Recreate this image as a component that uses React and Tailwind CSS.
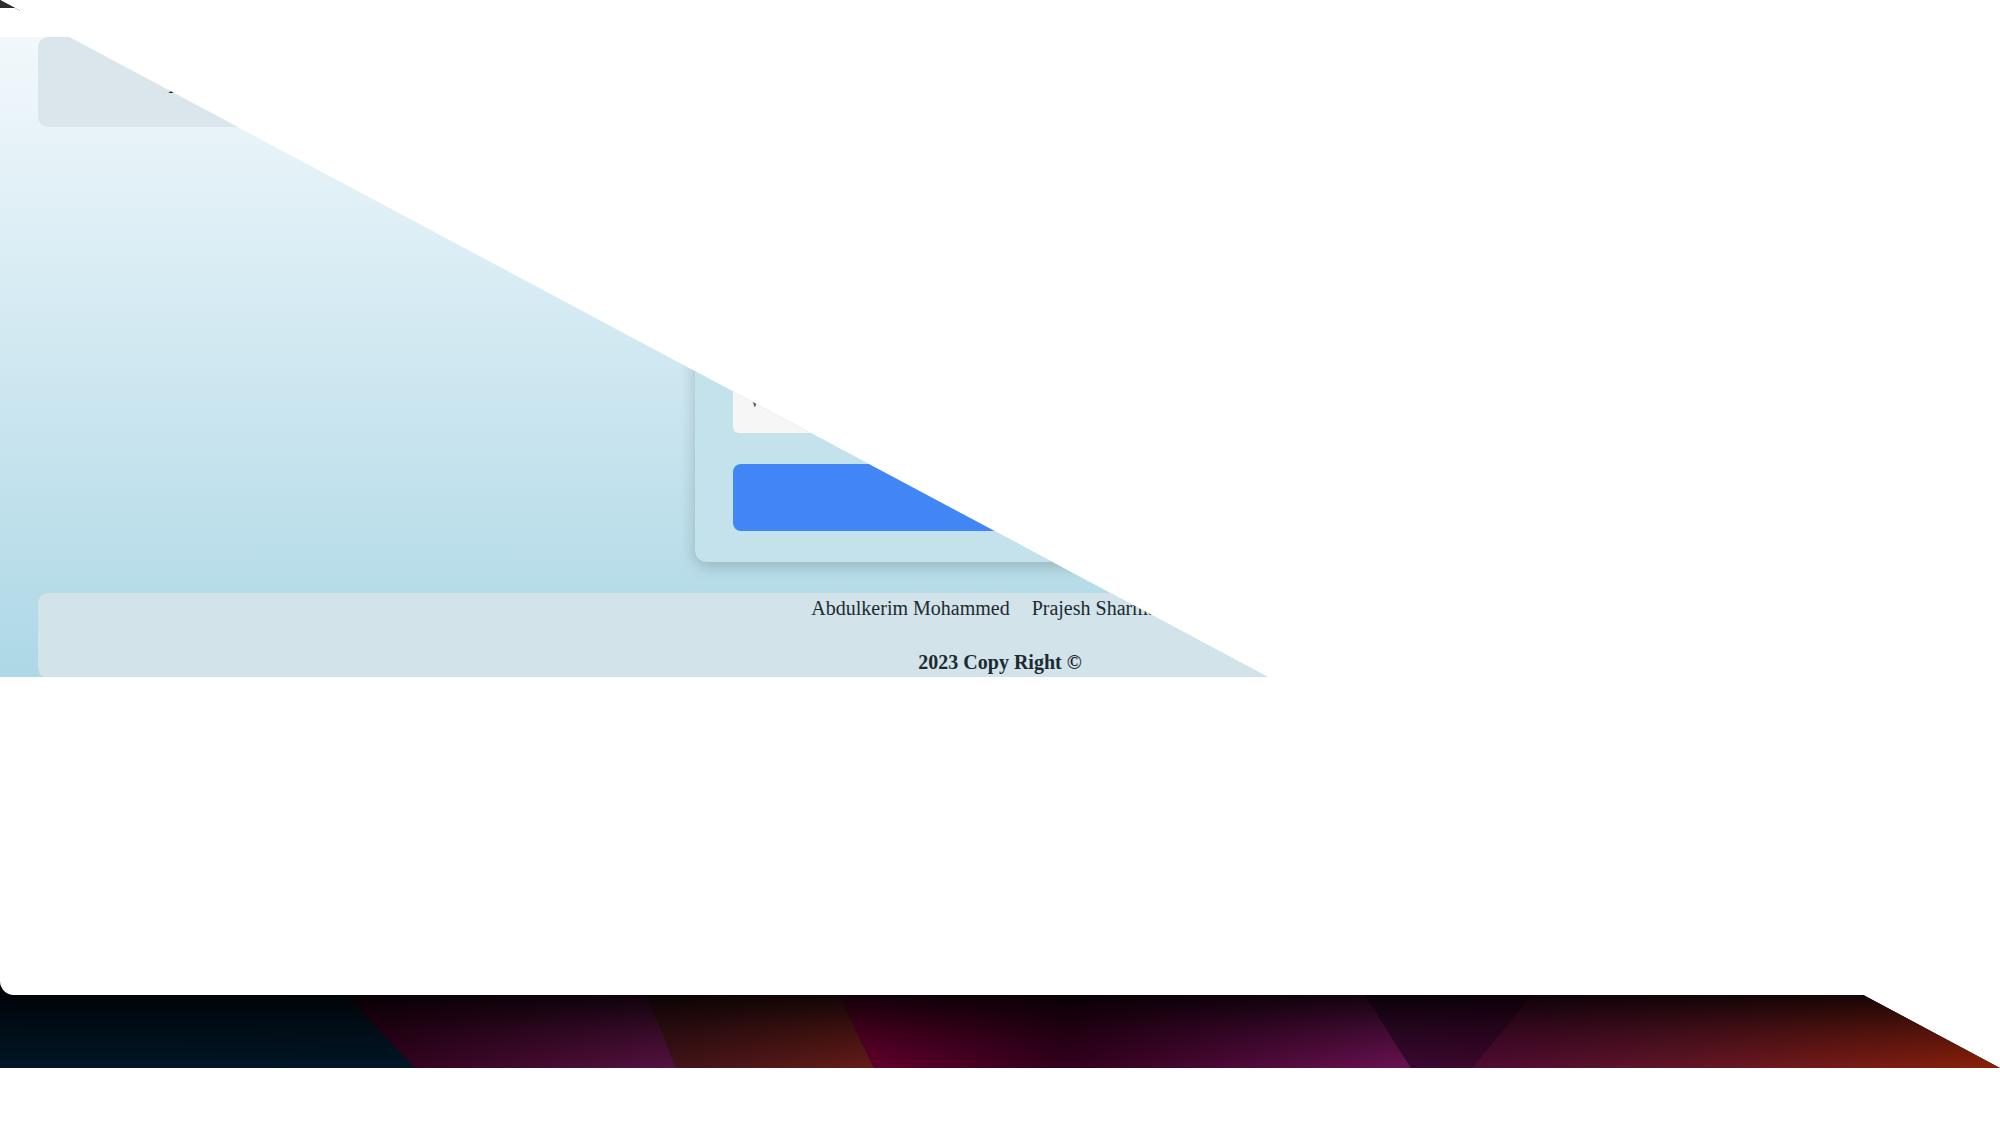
// Window captured mid-transition: everything above the diagonal is cut away
function Wallpaper() {
  return (
    <svg className="block w-[2000px] h-[73px]" viewBox="0 0 2000 73" preserveAspectRatio="none">
      <defs>
        <linearGradient id="fade" x1="0" y1="0" x2="0" y2="1">
          <stop offset="0" stopColor="#000" stopOpacity="0.82" />
          <stop offset="0.5" stopColor="#000" stopOpacity="0.36" />
          <stop offset="1" stopColor="#000" stopOpacity="0" />
        </linearGradient>
        <linearGradient id="b1" x1="0" y1="0" x2="1" y2="0">
          <stop offset="0" stopColor="#011626" />
          <stop offset="1" stopColor="#001322" />
        </linearGradient>
        <linearGradient id="b2" x1="0" y1="0" x2="1" y2="0">
          <stop offset="0" stopColor="#2c0018" />
          <stop offset="1" stopColor="#561240" />
        </linearGradient>
        <linearGradient id="b3" x1="0" y1="0" x2="1" y2="0">
          <stop offset="0" stopColor="#3d1218" />
          <stop offset="1" stopColor="#651c18" />
        </linearGradient>
        <linearGradient id="b4" x1="0" y1="0" x2="1" y2="0">
          <stop offset="0" stopColor="#6a002e" />
          <stop offset="0.4" stopColor="#32001c" />
          <stop offset="1" stopColor="#6a1252" />
        </linearGradient>
        <linearGradient id="b5" x1="0" y1="0" x2="1" y2="0">
          <stop offset="0" stopColor="#3a0a32" />
          <stop offset="1" stopColor="#3c0428" />
        </linearGradient>
        <linearGradient id="b6" x1="0" y1="0" x2="1" y2="0">
          <stop offset="0" stopColor="#500a32" />
          <stop offset="0.35" stopColor="#5e1428" />
          <stop offset="1" stopColor="#8a2008" />
        </linearGradient>
      </defs>
      <rect x="0" y="0" width="2000" height="73" fill="url(#b1)" />
      <polygon points="345,0 647,0 676,73 415,73" fill="url(#b2)" />
      <polygon points="647,0 839,0 874,73 676,73" fill="url(#b3)" />
      <polygon points="839,0 1365,0 1411,73 874,73" fill="url(#b4)" />
      <polygon points="1365,0 1532,0 1472,73 1411,73" fill="url(#b5)" />
      <polygon points="1532,0 2000,0 2000,73 1472,73" fill="url(#b6)" />
      <rect x="0" y="0" width="2000" height="73" fill="url(#fade)" />
    </svg>
  );
}

export default function App() {
  return (
    <div className="w-[2000px] h-[1125px] bg-white overflow-hidden font-['Liberation_Serif',serif]">
      <div className="w-[2000px] h-[1068px] flex flex-col bg-[linear-gradient(90deg,#00060c_20px,#fff_20px)] [clip-path:polygon(0_0,100%_100%,0_100%)]">
        <div className="h-[8px] shrink-0 bg-[#2e2e2e]" />
        <div className="h-[987px] shrink-0 bg-white rounded-b-[14px] pt-[29px] overflow-hidden">
          <div className="h-[640px] px-[38px] overflow-hidden bg-gradient-to-b from-[#f2f8fc] to-[#add8e6]">
            <header className="h-[90px] rounded-[10px] bg-[#dbe6ec] flex items-center pl-[130px] pt-[8px] text-[20px] text-[#222]">
              Home
            </header>
            <div className="mt-[38px] mx-auto w-[610px] h-[397px] rounded-[12px] flex flex-col justify-end gap-[31px] px-[38px] pb-[31px] bg-[#c4e2ec] shadow-[0_4px_16px_rgba(0,0,0,0.2)]">
              <div className="h-[67px] rounded-[6px] bg-[#f6f6f6] px-[16px] flex items-center text-[20px] text-[#555]">
                Welcome
              </div>
              <button className="h-[67px] rounded-[8px] bg-[#4285f4] text-white text-[20px]">Login</button>
            </div>
            <footer className="mt-[31px] h-[85px] rounded-[10px] bg-[#d2e3ea] pt-[4px] text-[20px] leading-[23px] text-[#1d2a30]">
              <div className="flex justify-center gap-[22px] pr-[32px]">
                <span>Abdulkerim Mohammed</span>
                <span>Prajesh Sharma</span>
              </div>
              <p className="mt-[31px] text-center font-bold">2023 Copy Right ©</p>
            </footer>
          </div>
        </div>
        <Wallpaper />
      </div>
    </div>
  );
}
